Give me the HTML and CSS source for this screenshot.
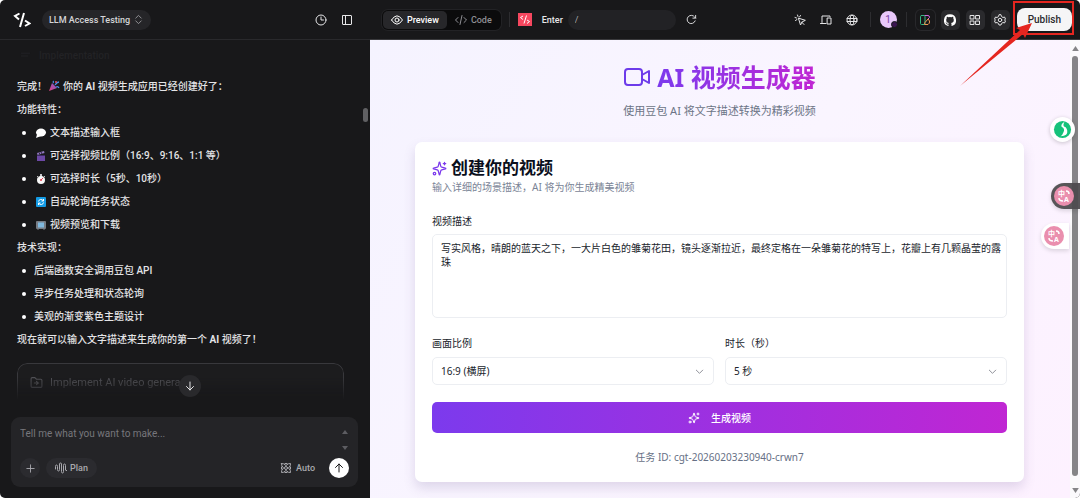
FILE: index.html
```html
<!DOCTYPE html>
<html lang="zh-CN">
<head>
<meta charset="utf-8">
<meta name="viewport" content="width=device-width, initial-scale=1">
<title>LLM Access Testing</title>
<link rel="stylesheet" href="styles.css">
</head>
<body>
<svg class="defs" aria-hidden="true">
  <defs>
    <linearGradient id="party" x1="0" y1="1" x2="1" y2="0"><stop offset="0" stop-color="#e0457b"/><stop offset="1" stop-color="#7a5ad6"/></linearGradient>
  </defs>
  <symbol id="sparkles" viewBox="0 0 24 24"><path d="M9.9 15.5A2 2 0 0 0 8.500 14.100L2.400 12.500a.5.5 0 0 1 0-1L8.500 9.900A2 2 0 0 0 9.900 8.500l1.600-6.100a.5.5 0 0 1 1 0L14.100 8.500A2 2 0 0 0 15.500 9.900l6.100 1.600a.5.5 0 0 1 0 1L15.500 14.100a2 2 0 0 0-1.400 1.400l-1.600 6.100a.5.5 0 0 1-1 0zM20 2v4M22 4h-4"/><circle cx="4" cy="20" r="2"/></symbol>
  <symbol id="chevron" viewBox="0 0 24 24"><path d="m5 9 7 7 7-7"/></symbol>
  <symbol id="code" viewBox="0 0 24 24"><path d="m18 17 5-5-5-5M6 7l-5 5 5 5M14 3l-4 18"/></symbol>
</svg>
<div class="app">
  <section class="chat">
    <header class="bar">
      <svg class="logo" viewBox="0 0 18 16"><path d="M6.500 1.500 2 4l4 3.500M11 1 7 15M12 8.500l4.500 3-4.500 2.500"/></svg>
      <button class="project">LLM Access Testing<svg class="icon s11" viewBox="0 0 24 24"><path d="m6 9 6-6 6 6M6 15l6 6 6-6"/></svg></button>
      <span class="grow"></span>
      <button class="plain" aria-label="History"><svg class="icon s12" viewBox="0 0 24 24"><circle cx="12" cy="12" r="10"/><path d="M12 6v6h5"/></svg></button>
      <button class="plain" aria-label="Sidebar"><svg class="icon s12" viewBox="0 0 24 24"><rect x="3" y="3" width="18" height="18" rx="1"/><path d="M9 3v18"/></svg></button>
    </header>
    <div class="log">
      <div class="ghost"><svg class="icon s11" viewBox="0 0 24 24"><path d="M3 7h18M3 13h14"/></svg>Implementation</div>
      <p>完成！<svg class="emoji party" viewBox="0 0 12 12"><path d="M1 11 4 3l5 5z" fill="url(#party)"/><path d="M5 3q1-1 0-2M7 5q2-3 4-3M8 7q2-1 3 1" fill="none" stroke="#4b8fe8" stroke-width="1.300"/><circle cx="8" cy="2" r="1" fill="#e14b6b"/></svg>你的 <b>AI</b> 视频生成应用已经创建好了：</p>
      <p>功能特性：</p>
      <ul>
        <li><svg class="emoji" viewBox="0 0 12 12"><ellipse cx="6" cy="5.500" rx="5" ry="4" fill="#fff"/><path d="M2 7.500 1 11l5-2z" fill="#fff"/></svg>文本描述输入框</li>
        <li><svg class="emoji" viewBox="0 0 12 12"><path d="M2 5h8v6H2z" fill="#6c48a5"/><path d="m2 3 7-2 .500 2L2.500 5z" fill="#8e77bb"/><path d="m4 2.500 1 2M6 2l1 2" stroke="#322448"/><path d="M2 5.500h8" stroke="#3c2a63"/></svg>可选择视频比例（16:9、9:16、1:1 等）</li>
        <li><svg class="emoji" viewBox="0 0 12 12"><path d="M5 1h2v3H5z" fill="#c8c8cc"/><circle cx="6" cy="7" r="4" fill="#f7f7f7"/><path d="m2 3 1.500 1.500M10 3 8.500 4.500" stroke="#bbb"/><path d="m6 7 2-2" stroke="#e23b4e"/><circle cx="6" cy="7" r="1" fill="#e23b4e"/></svg>可选择时长（5秒、10秒）</li>
        <li><svg class="emoji" viewBox="0 0 12 12"><rect x="1" y="1" width="10" height="10" rx="1" fill="#139be5"/><path d="M3.500 5.500A2.500 2.500 0 0 1 8 4.500M8.500 3v2H6.500M8.500 6.500A2.500 2.500 0 0 1 4 7.500M3.500 9V7h2" fill="none" stroke="#fff"/></svg>自动轮询任务状态</li>
        <li><svg class="emoji" viewBox="0 0 12 12"><rect x="1" y="2" width="10" height="8" rx="1" fill="#777c84"/><rect x="3" y="3.500" width="6" height="5" fill="#7fb8de"/><path d="M3 10v1M9 10v1" stroke="#777c84"/></svg>视频预览和下载</li>
      </ul>
      <p>技术实现：</p>
      <ul>
        <li>后端函数安全调用豆包 API</li>
        <li>异步任务处理和状态轮询</li>
        <li>美观的渐变紫色主题设计</li>
      </ul>
      <p>现在就可以输入文字描述来生成你的第一个 <b>AI</b> 视频了！</p>
      <div class="task"><svg class="icon s13" viewBox="0 0 24 24"><path d="M2 5a2 2 0 0 1 2-2h5l3 3h8a2 2 0 0 1 2 2v11a2 2 0 0 1-2 2H4a2 2 0 0 1-2-2zM8 13h8M12 10l3 3-3 3"/></svg>Implement AI video genera</div>
      <button class="down" aria-label="Scroll down"><svg class="icon s12" viewBox="0 0 24 24"><path d="M12 4v16M5 13l7 7 7-7"/></svg></button>
      <span class="thumb"></span>
    </div>
    <form class="composer">
      <div class="entry">
        <textarea rows="2" aria-label="Message" placeholder="Tell me what you want to make..."></textarea>
        <svg class="steps" viewBox="0 0 6 24"><path d="M3 3 6 7H0zM3 23l3-4H0z"/></svg>
      </div>
      <div class="tools">
        <button type="button" class="round" aria-label="Add"><svg class="icon s11" viewBox="0 0 24 24"><path d="M12 4v16M4 12h16"/></svg></button>
        <button type="button" class="plan"><svg class="icon s12" viewBox="0 0 24 24"><path d="M1 14V9q0-3 2-3t2 3v6q0 3 2 3t2-3V4q0-2 2-2t2 2v15q0 3 2 3t2-3V7q0-3 2-3t2 3v9q0 2 3 1"/></svg>Plan</button>
        <span class="grow"></span>
        <button type="button" class="auto"><svg class="icon s12" viewBox="0 0 24 24"><path d="M3 3q4-1 9 4 5-5 9-4 1 4-4 9 5 5 4 9-4 1-9-4-5 5-9 4-1-4 4-9-5-5-4-9z"/><path d="M3 14v-4M21 14v-4M10 3h4M10 21h4"/><circle cx="12" cy="12" r="3"/></svg>Auto</button>
        <button class="send" aria-label="Send"><svg class="icon s12" viewBox="0 0 24 24"><path d="M12 20V4M5 11l7-7 7 7"/></svg></button>
      </div>
    </form>
  </section>

  <section class="stage">
    <header class="bar stagebar">
      <div class="tabs">
        <button class="tab on"><svg class="icon s12" viewBox="0 0 24 24"><path d="M1 12q11-17 22 0-11 17-22 0z"/><circle cx="12" cy="12" r="4"/></svg>Preview</button>
        <button class="tab"><svg class="icon s12"><use href="#code"/></svg>Code</button>
      </div>
      <i class="rule"></i>
      <svg class="badge" viewBox="0 0 14 13"><path d="M0 0h14v13H0z" fill="#f6475f"/><path d="M5 3 2.500 4.500 5 6.500M8.500 2.500l-2.500 8M9 7l2.500 1.500L9 10.500" fill="none" stroke="#fff"/></svg>
      <label class="enter" for="route">Enter</label>
      <input class="route" id="route" type="text" value="/">
      <button class="plain" aria-label="Reload"><svg class="icon s11" viewBox="0 0 24 24"><path d="M20 15a9 9 0 1 1-1-8l2 2M21 3v6h-6"/></svg></button>
      <span class="grow"></span>
      <div class="views">
        <button class="plain" aria-label="Select element"><svg class="icon s12" viewBox="0 0 24 24"><path d="m9 9 4 13 3-6 6-3zM15 16l5 5M7 2l1 3M2 7l3 1M13 3l-2 3M3 13l3-2"/></svg></button>
        <button class="plain" aria-label="Devices"><svg class="icon s12" viewBox="0 0 24 24"><path d="M20 5V4H4v13M1 19h11"/><rect x="15" y="8" width="7" height="12"/></svg></button>
        <button class="plain" aria-label="Language"><svg class="icon s12" viewBox="0 0 24 24"><circle cx="12" cy="12" r="10"/><ellipse cx="12" cy="12" rx="4" ry="10"/><path d="M2 9h20M2 15h20"/></svg></button>
      </div>
      <i class="rule"></i>
      <span class="avatar">1</span>
      <i class="rule"></i>
      <div class="actions">
        <button class="tile dark" aria-label="Integrations"><svg class="icon s12" viewBox="0 0 24 24"><rect x="3" y="3" width="9" height="18" rx="2" stroke="#32b985"/><path d="M12 3h6q3 0 3 4l-3 3" stroke="#d265dc"/><path d="M12 21h6q4-2 3-7l-3-4-6 7z" stroke="#ee9650"/></svg></button>
        <button class="tile" aria-label="GitHub"><svg class="git" viewBox="0 0 24 24"><path d="M12 .5A12 12 0 0 0 8.200 23.900c.6.1.8-.3.8-.6v-2.200c-3.300.7-4-1.400-4-1.400-.6-1.400-1.400-1.800-1.400-1.800-1-.7.1-.7.1-.7 1.200.1 1.900 1.200 1.900 1.200 1 1.900 2.800 1.300 3.500 1 .1-.8.400-1.300.8-1.600-2.700-.3-5.500-1.300-5.500-6 0-1.300.5-2.300 1.200-3.200-.1-.3-.5-1.500.1-3.200 0 0 1-.3 3.300 1.200a11.500 11.500 0 0 1 6 0c2.300-1.500 3.300-1.200 3.300-1.200.7 1.700.2 2.900.1 3.200.8.9 1.200 1.900 1.200 3.200 0 4.700-2.800 5.700-5.500 6 .5.400.9 1.200.9 2.300v3.200c0 .3.200.7.800.6A12 12 0 0 0 12 .5z"/></svg></button>
        <button class="tile" aria-label="Apps"><svg class="icon s12" viewBox="0 0 24 24"><rect x="3" y="3" width="7" height="7"/><rect x="14" y="3" width="7" height="7"/><rect x="3" y="14" width="7" height="7"/><rect x="14" y="14" width="7" height="7"/></svg></button>
        <button class="tile" aria-label="Settings"><svg class="icon s12" viewBox="0 0 24 24"><path d="m10 2-1 3-3 2-3-1-2 4 2 2-2 2 2 4 3-1 3 2 1 3h4l1-3 3-2 3 1 2-4-2-2 2-2-2-4-3 1-3-2-1-3z"/><circle cx="12" cy="12" r="3.500"/></svg></button>
      </div>
      <button class="publish">Publish</button>
    </header>

    <div class="viewport">
      <main class="page">
        <h1><svg class="icon cam" viewBox="0 0 28 22"><rect x="2" y="3" width="17" height="16" rx="3"/><path d="m19 9 7-4v12l-7-4"/></svg><span>AI 视频生成器</span></h1>
        <p class="lead">使用豆包 AI 将文字描述转换为精彩视频</p>
        <form class="card">
          <h2><svg class="icon s15"><use href="#sparkles"/></svg>创建你的视频</h2>
          <p class="hint">输入详细的场景描述，AI 将为你生成精美视频</p>
          <label class="label" for="desc">视频描述</label>
          <textarea class="desc" id="desc">写实风格，晴朗的蓝天之下，一大片白色的雏菊花田，镜头逐渐拉近，最终定格在一朵雏菊花的特写上，花瓣上有几颗晶莹的露珠</textarea>
          <div class="pair">
            <div class="field">
              <label class="label" for="ratio">画面比例</label>
              <div class="pick"><select id="ratio"><option>16:9 (横屏)</option></select><svg class="icon s11"><use href="#chevron"/></svg></div>
            </div>
            <div class="field">
              <label class="label" for="time">时长（秒）</label>
              <div class="pick"><select id="time"><option>5 秒</option></select><svg class="icon s11"><use href="#chevron"/></svg></div>
            </div>
          </div>
          <button type="button" class="make"><svg class="icon s12"><use href="#sparkles"/></svg>生成视频</button>
          <p class="job">任务 ID: cgt-20260203230940-crwn7</p>
        </form>
      </main>
      <div class="scroll"><svg viewBox="0 0 8 6"><path d="m4 0 4 6H0z"/></svg><span></span><svg viewBox="0 0 8 6"><path d="m4 6 4-6H0z"/></svg></div>
    </div>
  </section>

  <div class="float green"><svg viewBox="0 0 20 20"><circle cx="10" cy="10" r="9" fill="#15c27a"/><path d="M12 2q-4 2-3 5 4 2 2 6-1 3-3 4 8 0 7-6-1-4-3-4-2-1 0-5z" fill="#fff"/></svg></div>
  <div class="float shade"><svg viewBox="0 0 20 20"><circle cx="10" cy="10" r="10" fill="#ea8fae"/><path d="M12 5q3 0 3 3M5 12q0 3 4 3" fill="none" stroke="#fff" stroke-width="1.500"/><text x="4" y="10">中</text><text x="10" y="16">A</text></svg></div>
  <div class="float white"><svg viewBox="0 0 20 20"><circle cx="10" cy="10" r="10" fill="#ea8fae"/><path d="M12 5q3 0 3 3M5 12q0 3 4 3" fill="none" stroke="#fff" stroke-width="1.500"/><text x="4" y="10">中</text><text x="10" y="16">A</text></svg></div>
  <svg class="pointer" viewBox="0 0 120 88"><path d="M54 2h59v32H54z" fill="none" stroke="#e52620" stroke-width="2"/><path d="M0 86 60 30l-4-2 16-5-7 15-2-4z" fill="#e52620"/></svg>
</div>
</body>
</html>
```
FILE: styles.css
```css
* { box-sizing: border-box; }
body { margin: 0; background: #fff; font-family: Roboto, "Noto Sans CJK SC", sans-serif; font-size: 10px; color: #e6e6e8; }
h1, h2, p, ul { margin: 0; padding: 0; }
button, input, textarea, select { font: inherit; color: inherit; margin: 0; padding: 0; border: 0; background: none; outline: 0; }
button { display: flex; align-items: center; justify-content: center; flex: none; }
textarea { resize: none; display: block; width: 100%; overflow: hidden; }
svg { flex: none; display: block; }
.defs { position: absolute; width: 0; height: 0; }
.icon { fill: none; stroke: currentColor; stroke-width: 2; stroke-linecap: round; stroke-linejoin: round; }
.s11 { width: 11px; height: 11px; }
.s12 { width: 12px; height: 12px; }
.s13 { width: 13px; height: 13px; }
.s15 { width: 15px; height: 15px; }
.grow { flex: 1; }

.app { position: relative; display: grid; grid-template-columns: 37fr 71fr; min-height: 100vh; background: #18181a; border-radius: 5px; overflow: hidden; }
.chat, .stage { display: flex; flex-direction: column; min-width: 0; }
.bar { display: flex; align-items: center; height: 40px; border-bottom: 1px solid #29292c; flex: none; font-size: 9px; }

.chat .bar { padding: 0 17px 0 13px; gap: 14px; }
.logo { width: 18px; height: 16px; fill: none; stroke: #fff; stroke-width: 2; }
.project { height: 20px; padding: 0 7px; gap: 3px; margin-left: -3px; border-radius: 10px; background: #252528; font-weight: 500; color: #d5d5d8; }
.project .icon { color: #99999d; }

.log { position: relative; flex: 1; padding: 10px 26px 0 17px; line-height: 23px; color: #e4e4e6; font-weight: 500; }
.ghost { display: flex; align-items: center; gap: 8px; height: 11px; margin-bottom: 14px; padding-left: 3px; color: #222225; }
.log p { white-space: nowrap; }
.log ul { list-style: none; }
.log li { position: relative; display: flex; align-items: center; padding-left: 17px; white-space: nowrap; }
.log li::before { content: ""; position: absolute; left: 5px; width: 4px; height: 4px; border-radius: 50%; background: #fff; }
.emoji { width: 12px; height: 12px; margin: 0 3px 0 1px; }
.party { display: inline-block; vertical-align: -2px; }
.task { display: flex; gap: 7px; height: 37px; margin-top: 12px; padding: 12px 12px 0; border: 1px solid #38383c; border-bottom: 0; border-radius: 10px 10px 0 0; font-size: 11px; line-height: 13px; font-weight: 400; color: #505055; background: #1c1c1e; -webkit-mask-image: linear-gradient(#000 40%, transparent); mask-image: linear-gradient(#000 40%, transparent); }
.down { position: absolute; left: 50%; bottom: 20px; width: 22px; height: 22px; margin-left: -6px; border-radius: 50%; background: #29292c; }
.thumb { position: absolute; right: 2px; top: 68px; width: 5px; height: 14px; border-radius: 3px; background: #606063; }

.composer { margin: 0 12px 11px 11px; padding: 9px; border-radius: 9px; background: #242427; }
.entry { display: flex; justify-content: space-between; align-items: flex-start; height: 32px; color: #77777c; font-size: 10px; line-height: 16px; }
.entry textarea::placeholder { color: #77777c; }
.steps { width: 6px; height: 24px; margin: 1px 1px 0 0; fill: #5d5d62; }
.tools { display: flex; align-items: center; height: 20px; color: #a9a9ae; font-size: 9px; font-weight: 500; }
.round { width: 20px; height: 20px; border-radius: 50%; background: #2b2b2f; }
.plan { height: 20px; margin-left: 6px; padding: 0 9px; gap: 3px; border-radius: 10px; background: #2b2b2f; }
.auto { gap: 4px; margin-right: 14px; }
.send { width: 20px; height: 20px; border-radius: 50%; background: #fff; color: #18181a; }

.stagebar { padding: 0 8px 0 12px; border-color: #3a3a3d; }
.tabs { display: flex; height: 20px; padding: 1px; border-radius: 6px; background: #0b0b0c; box-shadow: 0 0 0 1px #222225; }
.tab { gap: 4px; padding: 0 8px; border-radius: 5px; color: #909095; font-weight: 500; }
.tab.on { background: #27272a; color: #fff; }
.rule { width: 1px; height: 15px; margin: 0 9px; background: #2d2d30; flex: none; }
.tabs + .rule { margin: 0 8px; }
.badge { width: 14px; height: 13px; }
.enter { margin: 0 5px 0 10px; font-weight: 500; }
.route { flex: 0 1 108px; min-width: 40px; height: 20px; margin-right: 10px; padding: 0 7px; border-radius: 10px; background: #222225; color: #aaaaae; }
.views { display: flex; gap: 14px; padding-right: 3px; }
.avatar { position: relative; width: 17px; height: 17px; font-size: 10px; line-height: 17px; text-align: center; border-radius: 50%; background: #e8c8fa; color: #7842a0; flex: none; }
.avatar::after { content: ""; position: absolute; right: -1px; bottom: 0; width: 5px; height: 5px; border-radius: 50%; background: #3a1450; border: 1px solid #18181a; }
.actions { display: flex; gap: 6px; margin-right: 7px; }
.tile { width: 19px; height: 20px; border-radius: 5px; background: #2a2a2d; }
.tile.dark { background: #18181a; box-shadow: 0 0 0 1px #28282b; }
.git { width: 12px; height: 12px; fill: #fff; }
.publish { height: 23px; padding: 0 11px; border-radius: 8px; background: #f5f5f6; color: #2b2b2e; font-size: 10px; font-weight: 500; }

.viewport { flex: 1; display: flex; min-height: 0; color: #20242c; font-family: "Noto Sans", "Noto Sans CJK SC", sans-serif; }
.page { flex: 1; min-width: 0; padding: 20px 46px 15px 45px; background: linear-gradient(125deg, #f5f3ff, #faf5ff 50%, #fdf1ff); }
h1 { display: flex; align-items: center; justify-content: center; gap: 6px; font-size: 25px; line-height: 34px; color: #6d3bea; }
h1 span { background: linear-gradient(90deg, #7c3aed, #c026d3); -webkit-background-clip: text; background-clip: text; color: transparent; }
.cam { width: 28px; height: 22px; }
.lead { margin-top: 8px; text-align: center; font-size: 11px; line-height: 17px; color: #6c7486; }
.card { max-width: 640px; margin: 23px auto 0; padding: 17px; border-radius: 7px; background: #fff; box-shadow: 0 6px 12px #64508c2e; }
h2 { display: flex; align-items: center; gap: 4px; font-size: 17px; line-height: 18px; color: #0a0f1c; }
h2 .icon { color: #7c3aed; }
.hint { margin-top: 3px; line-height: 14px; color: #7a8496; }
.label { display: block; line-height: 14px; }
.hint + .label { margin-top: 20px; }
.desc { height: 84px; margin-top: 6px; padding: 6px 4px 6px 8px; border: 1px solid #eceef2; border-radius: 5px; line-height: 14px; }
.pair { display: grid; grid-template-columns: 1fr 1fr; gap: 11px; margin-top: 18px; }
.pick { display: grid; align-items: center; margin-top: 7px; }
.pick > * { grid-area: 1 / 1; }
.pick .icon { justify-self: end; margin-right: 9px; color: #858890; pointer-events: none; }
select { appearance: none; width: 100%; height: 28px; padding: 0 8px; border: 1px solid #eceef2; border-radius: 5px; }
.make { width: 100%; height: 31px; margin-top: 17px; gap: 11px; border-radius: 5px; background: linear-gradient(90deg, #7c3aed, #c026d3); color: #fff; font-weight: 500; }
.job { margin-top: 17px; padding-bottom: 1px; text-align: center; line-height: 14px; color: #667085; }
.scroll { display: flex; flex-direction: column; align-items: center; width: 10px; padding: 6px 0 5px; gap: 5px; background: #fbfafc; }
.scroll svg { width: 7px; height: 5px; fill: #858587; }
.scroll span { flex: 1; width: 6px; margin-bottom: 7px; border-radius: 3px; background: #858587; }

.float { position: absolute; right: 0; display: flex; align-items: center; padding: 3px; border-radius: 13px 0 0 13px; }
.float svg { width: 20px; height: 20px; overflow: visible; }
.float text { fill: #fff; font: 700 7px "Noto Sans", "Noto Sans CJK SC", sans-serif; }
.green { right: 5px; top: 117px; border-radius: 50%; background: #fff; box-shadow: 0 1px 4px #0003; }
.green svg { width: 19px; height: 19px; }
.shade { top: 183px; padding-right: 6px; background: #4c4a4ef0; box-shadow: 0 2px 4px #0002; }
.white { top: 223px; right: 11px; padding-right: 5px; background: #fff; box-shadow: 0 2px 4px #0002; }
.pointer { position: absolute; top: 0; right: 0; width: 120px; height: 88px; pointer-events: none; }
```
